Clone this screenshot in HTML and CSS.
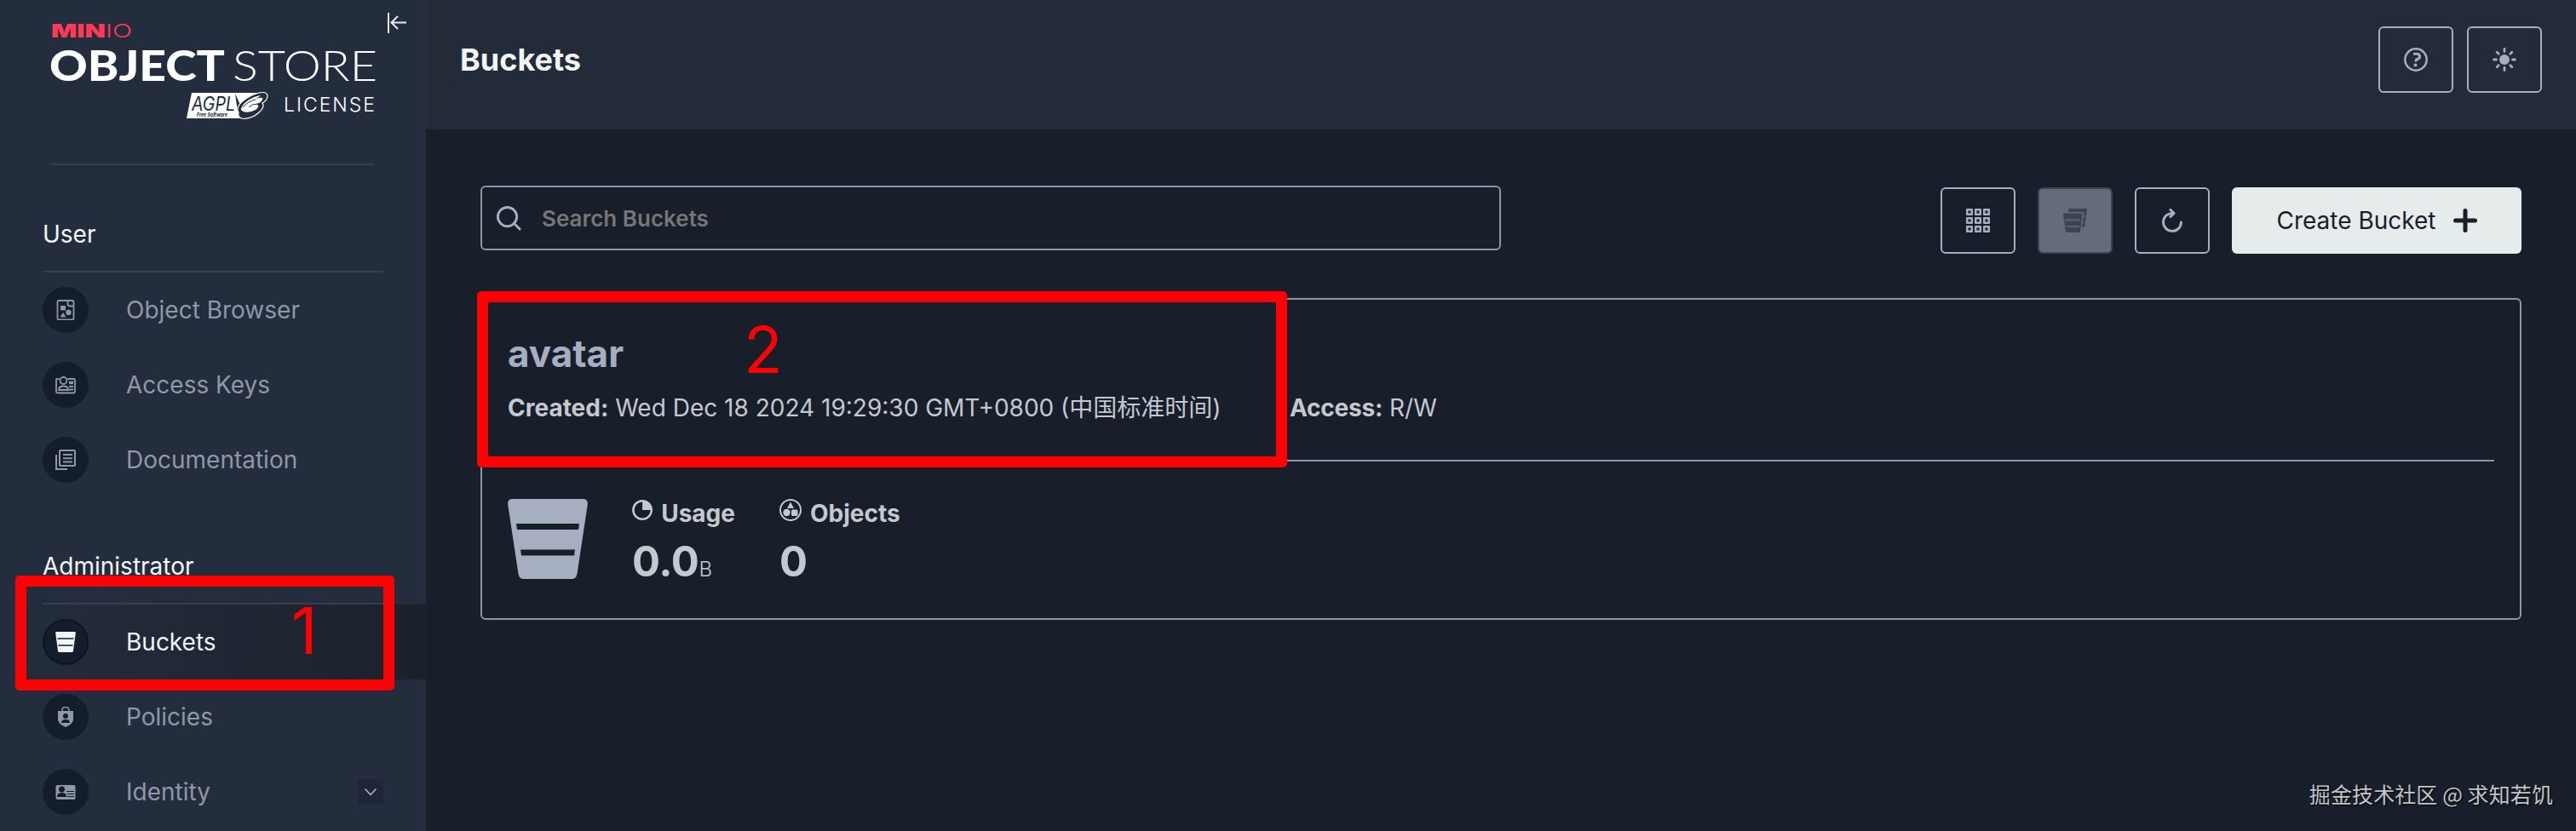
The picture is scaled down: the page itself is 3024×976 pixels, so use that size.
FILE: index.html
```html
<!DOCTYPE html>
<html lang="en">
<head>
  <meta charset="UTF-8">
  <meta name="viewport" content="width=device-width, initial-scale=1.0">
  <title>MinIO Console</title>
  <link rel="stylesheet" href="styles.css">
</head>
<body>
  <div class="layout">
    <aside class="sidebar">
      <div class="logo-box">
        <svg class="logo" width="380" height="120" viewBox="0 0 380 120">
          <g class="logo-brand">
            <text class="heavy" x="0" y="22" textLength="64" lengthAdjust="spacingAndGlyphs">MIN</text>
            <text class="thin" x="64" y="22" textLength="31" lengthAdjust="spacingAndGlyphs">IO</text>
          </g>
          <text class="logo-object" x="-2" y="73" textLength="206" lengthAdjust="spacingAndGlyphs">OBJECT</text>
          <text class="logo-store" x="213" y="73" textLength="170" lengthAdjust="spacingAndGlyphs">STORE</text>
          <!-- AGPL v3 badge -->
          <path d="M165 87H245L252 89L225 117H159Z" fill="#fff"/>
          <text class="agpl" x="165" y="108" textLength="51" lengthAdjust="spacingAndGlyphs">AGPL</text>
          <text class="agpl-small" x="171" y="114.500" textLength="36" lengthAdjust="spacingAndGlyphs">Free Software</text>
          <path d="M216 88l3 21 3-8z" fill="#242c3d"/>
          <path d="M220 110C214 100 238 86 250 86.500C257 88 254 96 248 99C253 104 240 117 226 117.500C221 117 219 114 220 110Z" fill="#242c3d" stroke="#fff" stroke-width="1.200"/>
          <path d="M223 107C224 98 238 91 246 90Q243 93 239 94.500Q250 91 248 95Q246 99 241 100Q246 103 240 107C234 110 226 111 223 107Z" fill="#fff"/>
          <path d="M225 104Q231 97 240 95M232 104Q236 100 242 100" fill="none" stroke="#242c3d" stroke-width="1"/>
          <text class="logo-license" x="273" y="109" textLength="109">LICENSE</text>
        </svg>
        <svg class="collapse" width="24" height="26" viewBox="0 0 24 26" fill="none" stroke="#e6ebf5" stroke-width="2">
          <path d="M2 1v24M23 12.500H6M13 5L5.500 12.500L13 20"/>
        </svg>
      </div>

      <nav class="menu">
        <div class="menu-title">User</div>
        <a class="item">
          <span class="circle">
            <svg width="24" height="24" viewBox="0 0 24 24"><rect x="2.500" y="1" width="19" height="22.500" rx="1.500" fill="none" stroke="currentColor" stroke-width="1.800"/><path d="M14.500 1v4q0 2.500 2.500 2.500h4" fill="none" stroke="currentColor" stroke-width="1.800"/><rect x="6" y="7" width="6" height="5.500" fill="currentColor"/><circle cx="15.500" cy="15" r="3.200" fill="currentColor"/><path d="M9 15l3.500 5.500h-7z" fill="currentColor"/></svg>
          </span>
          <span class="label">Object Browser</span>
        </a>
        <a class="item">
          <span class="circle">
            <svg width="24" height="24" viewBox="0 0 24 24" fill="none" stroke="currentColor" stroke-width="1.800"><path d="M4.500 5H2.400Q1 5 1 6.500V20Q1 21.500 2.500 21.500H21.500Q23 21.500 23 20V6.500Q23 5 21.500 5H14.500"/><circle cx="9.500" cy="7" r="4"/><path d="M4 18q0-4.500 5.500-4.500T15 18z"/><path d="M16 9.500h5" stroke-width="3.500"/><path d="M16 14h5M16 17.500h5"/></svg>
          </span>
          <span class="label">Access Keys</span>
        </a>
        <a class="item">
          <span class="circle">
            <svg width="24" height="24" viewBox="0 0 24 24" fill="none" stroke="currentColor" stroke-width="2"><rect x="5" y="1" width="18" height="18" rx="1"/><path d="M9 6h11M9 10.300h11M9 14.600h11M1 6V23H14"/></svg>
          </span>
          <span class="label">Documentation</span>
        </a>

        <div class="menu-title">Administrator</div>
        <a class="item active">
          <span class="circle">
            <svg width="24" height="24" viewBox="0 0 24 24"><path d="M1.500 0h21q1.500 0 1.300 1.500L21 22.500q-.2 1.500-1.700 1.500H4.700Q3.200 24 3 22.500L.2 1.500Q0 0 1.500 0z" fill="currentColor"/><path d="M2.500 8h19M3.500 16h17" stroke="#141c2b" stroke-width="1.500"/></svg>
          </span>
          <span class="label">Buckets</span>
        </a>
        <a class="item">
          <span class="circle">
            <svg width="24" height="24" viewBox="0 0 24 24"><path d="M8 6V4.500q0-4 4-4t4 4V6" fill="none" stroke="currentColor" stroke-width="1.500"/><path d="M3 5h18v10q0 5-9 9q-9-4-9-9z" fill="currentColor"/><circle cx="12" cy="11" r="3" fill="#141c2b"/><path d="M7 19q0-4 5-4t5 4z" fill="#141c2b"/></svg>
          </span>
          <span class="label">Policies</span>
        </a>
        <a class="item">
          <span class="circle">
            <svg width="24" height="24" viewBox="0 0 24 24"><rect x=".5" y="4" width="23" height="17" rx="2" fill="currentColor"/><circle cx="7.500" cy="9" r="3.500" fill="#141c2b"/><path d="M2 18q0-5 5.500-5t5.500 5z" fill="#141c2b"/><path d="M13 11.500h9M13.500 14.500h8.500M13.500 17.500h8.500" stroke="#141c2b" stroke-width="1"/></svg>
          </span>
          <span class="label">Identity</span>
          <span class="expand">
            <svg width="16" height="10" viewBox="0 0 16 10" fill="none" stroke="#b4bac6" stroke-width="1.500"><path d="M1.500 1.500L8 8.500L14.500 1.500"/></svg>
          </span>
        </a>
      </nav>
    </aside>

    <main class="content">
      <header class="page-header">
        <h1>Buckets</h1>
        <div class="header-actions">
          <button class="btn">
            <svg width="28" height="28" viewBox="0 0 28 28" fill="none" stroke="currentColor"><circle cx="14" cy="14" r="12.700" stroke-width="2.500"/><path d="M11 7.500Q18.500 6 18.500 10.500Q18.500 13 15.500 13.500Q14 14 14 16.500" stroke-width="3"/><circle cx="13.500" cy="20.500" r="2" fill="currentColor" stroke="none"/></svg>
          </button>
          <button class="btn">
            <svg width="28" height="28" viewBox="0 0 28 28"><circle cx="14" cy="14" r="6" fill="currentColor"/><path d="M14 1.500v3M14 23.500v3M1.500 14h3M23.500 14h3M5.200 5.200l2 2M20.800 20.800l2 2M5.200 22.800l2-2M20.800 7.200l2-2" stroke="currentColor" stroke-width="2.800" stroke-linecap="round"/></svg>
          </button>
        </div>
      </header>

      <section class="page-body">
        <div class="toolbar">
          <label class="search">
            <svg width="29" height="29" viewBox="0 0 30 30" fill="none" stroke="currentColor" stroke-width="3" stroke-linecap="round"><circle cx="13" cy="13" r="11.500"/><path d="M21 21l7 7"/></svg>
            <input type="text" placeholder="Search Buckets">
          </label>
          <div class="tools">
            <button class="btn">
              <svg width="28" height="28" viewBox="0 0 28 28" fill="none" stroke="currentColor" stroke-width="2.500" stroke-linejoin="round"><path d="M1.200 1.200h5.600v5.600H1.200zM11.200 1.200h5.600v5.600h-5.600zM21.200 1.200h5.600v5.600h-5.600zM1.200 11.200h5.600v5.600H1.200zM11.200 11.200h5.600v5.600h-5.600zM21.200 11.200h5.600v5.600h-5.600zM1.200 21.200h5.600v5.600H1.200zM11.200 21.200h5.600v5.600h-5.600zM21.200 21.200h5.600v5.600h-5.600z"/></svg>
            </button>
            <button class="btn selected">
              <svg width="28" height="28" viewBox="0 0 28 28" fill="currentColor"><path d="M7 0h20q1.200 0 1 1.200L25.500 20.500q-.2 1.500-3.500 1.500L24.200 6Q24.400 4 22.500 4H6.500L6 1.200Q5.800 0 7 0z"/><path d="M1 5.500h20.500q1.200 0 1 1.500L20 26.500Q19.800 28 18.500 28H4.500Q3.200 28 3 26.500L0 7Q-.2 5.500 1 5.500z"/><path d="M2 13.500h18M3 21h16M24 9h2M23.500 16.500h2" stroke="#646c7c" stroke-width="1.300"/></svg>
            </button>
            <button class="btn">
              <svg width="28" height="28" viewBox="0 0 28 28" fill="none" stroke="currentColor" stroke-width="3"><path d="M15.500 5.500A10.500 10.500 0 1 0 24.500 16" stroke-linecap="round"/><path d="M12 1.500l4 4-4 4" stroke-linecap="round" stroke-linejoin="round"/></svg>
            </button>
            <button class="create">
              <span>Create Bucket</span>
              <svg width="28" height="28" viewBox="0 0 28 28" stroke="currentColor" stroke-width="5" stroke-linecap="round"><path d="M14 2.500v23M2.500 14h23"/></svg>
            </button>
          </div>
        </div>

        <article class="bucket">
          <div class="bucket-head">
            <h2>avatar</h2>
            <div class="bucket-info">
              <p class="created"><b>Created:</b> Wed Dec 18 2024 19:29:30 GMT+0800 (中国标准时间)</p>
              <p class="access"><b>Access:</b> R/W</p>
            </div>
          </div>
          <div class="bucket-stats">
            <svg class="bucket-icon" width="94" height="94" viewBox="0 0 94 94"><path d="M6 0H88Q94.500 0 93.800 6.500L81.500 88Q80.500 94 75 94H19Q13.500 94 12.500 88L.2 6.500Q-.5 0 6 0z" fill="#a5afc1"/><path d="M10 29h74l-1 7H11zM15 59.500h64l-1 7H16z" fill="#181f2a"/></svg>
            <div class="stat usage">
              <div class="stat-name">
                <svg width="26" height="26" viewBox="0 0 26 26"><circle cx="13" cy="13" r="11.500" fill="none" stroke="currentColor" stroke-width="2.700"/><path d="M13 2v11h11A11 11 0 0 0 13 2z" fill="currentColor"/></svg>
                Usage
              </div>
              <div class="stat-value">0.0<span>B</span></div>
            </div>
            <div class="stat objects">
              <div class="stat-name">
                <svg width="26" height="26" viewBox="0 0 26 26"><circle cx="13" cy="13" r="12" fill="none" stroke="currentColor" stroke-width="1.900"/><path d="M13 3.500l4 7.500H9z" fill="currentColor"/><circle cx="8.500" cy="16" r="4.200" fill="currentColor"/><rect x="14" y="12.500" width="7.500" height="7.500" rx="1.500" fill="currentColor"/></svg>
                Objects
              </div>
              <div class="stat-value">0</div>
            </div>
          </div>
        </article>
      </section>
    </main>
  </div>

  <div class="mark mark-one"></div>
  <div class="mark mark-two"></div>
  <span class="step step-one">1</span>
  <span class="step step-two">2</span>
  <span class="watermark">掘金技术社区 @ 求知若饥</span>
</body>
</html>
```
FILE: styles.css
```css
* {
  box-sizing: border-box;
}
body {
  margin: 0;
  font-family: Inter, "Noto Sans CJK SC", sans-serif;
  font-size: 28px;
  background-color: #181f2a;
  color: #c4c9d0;
  overflow: hidden;
}
h1, h2, p {
  margin: 0;
}
.layout {
  display: flex;
  height: 976px;
}

/* Sidebar */
.sidebar {
  width: 500px;
  flex: none;
  background-color: #242d3d;
  overflow: hidden;
}
.logo-box {
  display: flex;
  align-items: flex-start;
  height: 194px;
  width: 380px;
  margin-left: 60px;
  padding-top: 22px;
  border-bottom: 2px solid #363e50;
}
.logo {
  flex: none;
  overflow: visible;
}
.collapse {
  flex: none;
  margin: -8px 0 0 14px;
}
.logo-brand {
  fill: #ff3a56;
  font-size: 22px;
}
.heavy {
  font-weight: 900;
}
.thin {
  font-weight: 300;
}
.logo-object, .logo-store {
  fill: #fff;
  font-family: Lato, sans-serif;
  font-size: 50px;
}
.logo-object {
  font-weight: 900;
}
.logo-store {
  font-weight: 300;
}
.agpl, .agpl-small {
  fill: #242d3d;
  font-style: italic;
}
.agpl {
  font-size: 23px;
}
.agpl-small {
  font-size: 6px;
  font-weight: 700;
}
.logo-license {
  fill: #fff;
  font-size: 23px;
  font-weight: 300;
  letter-spacing: 2px;
}
.menu-title {
  height: 126px;
  margin: 0 50px;
  padding-top: 64px;
  line-height: 34px;
  border-bottom: 2px solid #363e50;
  color: #f3f6fc;
}
.item {
  display: flex;
  align-items: center;
  height: 88px;
  padding: 0 50px;
  color: #8f97a8;
}
.circle {
  display: flex;
  align-items: center;
  justify-content: center;
  width: 54px;
  height: 54px;
  border-radius: 50%;
  background-color: #141d2c;
}
.label {
  margin-left: 44px;
}
.item.active {
  color: #f3f6fc;
  background: linear-gradient(to right, #242d3d, #1b212b);
}
.active .circle {
  border: 2px solid #0d1521;
}
.expand {
  display: flex;
  align-items: center;
  justify-content: center;
  width: 30px;
  height: 30px;
  margin-left: auto;
  border-radius: 4px;
  background-color: #20263a;
}

/* Header */
.content {
  flex: 1;
}
.page-header {
  display: flex;
  align-items: center;
  justify-content: space-between;
  height: 152px;
  padding: 0 40px 12px;
  background-color: #242b38;
}
h1 {
  font-size: 36px;
  color: #f3f6fc;
}
.header-actions {
  display: flex;
  gap: 16px;
}
.btn {
  display: flex;
  align-items: center;
  justify-content: center;
  width: 88px;
  height: 78px;
  padding: 0;
  border: 2px solid #a5afc1;
  border-radius: 6px;
  background: transparent;
  color: #a5afc1;
}
.btn.selected {
  border-color: #3c4454;
  background-color: #646c7c;
  color: #3c4454;
}

/* Toolbar */
.page-body {
  padding: 66px 64px 0;
}
.toolbar {
  display: flex;
  justify-content: space-between;
  align-items: flex-start;
  height: 132px;
}
.search {
  display: flex;
  align-items: center;
  width: 1198px;
  height: 76px;
  padding: 0 17px;
  border: 2px solid #8d95a2;
  border-radius: 6px;
  color: #a5afc1;
}
.search input {
  flex: 1;
  margin-left: 24px;
  padding: 0;
  border: none;
  outline: none;
  background: transparent;
  font: 600 26px Inter, sans-serif;
}
.search input::placeholder {
  color: #767676;
}
.tools {
  display: flex;
  gap: 26px;
  padding-top: 2px;
}
.create {
  display: flex;
  align-items: center;
  justify-content: center;
  gap: 20px;
  width: 340px;
  height: 78px;
  border: none;
  border-radius: 6px;
  background-color: #e6ebeb;
  color: #181f2a;
  font: 28px Inter, sans-serif;
}

/* Bucket card */
.bucket {
  height: 378px;
  padding: 0 30px;
  border: 2px solid #8d95a2;
  border-radius: 6px;
}
.bucket-head {
  height: 190px;
  padding-top: 36px;
  border-bottom: 2px solid #8d95a2;
}
h2 {
  font-size: 44px;
  line-height: 54px;
  color: #a5afc1;
}
.bucket-info {
  display: flex;
  margin-top: 18px;
  line-height: 38px;
  white-space: nowrap;
}
.created {
  width: 918px;
}
.access b {
  letter-spacing: -0.2px;
}
.bucket-stats {
  display: flex;
  padding-top: 44px;
}
.usage {
  width: 121px;
  margin-left: 52px;
}
.objects {
  margin-left: 52px;
}
.stat-name {
  display: flex;
  gap: 10px;
  line-height: 34px;
  font-weight: 700;
}
.stat-value {
  margin-top: 12px;
  font-size: 49px;
  line-height: 56px;
  font-weight: 700;
  letter-spacing: -0.4px;
}
.stat-value span {
  font-size: 24px;
  font-weight: 300;
}

/* Step highlights */
.mark {
  position: absolute;
  border: 13px solid #ff0004;
  border-radius: 5px;
}
.mark-one {
  left: 18px;
  top: 676px;
  width: 445px;
  height: 135px;
}
.mark-two {
  left: 560px;
  top: 342px;
  width: 951px;
  height: 207px;
}
.step {
  position: absolute;
  color: #ff0004;
  font-size: 75px;
  line-height: 90px;
}
.step-one {
  left: 342px;
  top: 696px;
}
.step-two {
  left: 873px;
  top: 366px;
}
.watermark {
  position: absolute;
  right: 27px;
  bottom: 26px;
  font-family: "Noto Sans CJK SC", sans-serif;
  font-size: 25px;
  line-height: 36px;
  letter-spacing: 0.1px;
  color: #c3c5c9;
  text-shadow: 1px 1px 2px #000;
}
```
